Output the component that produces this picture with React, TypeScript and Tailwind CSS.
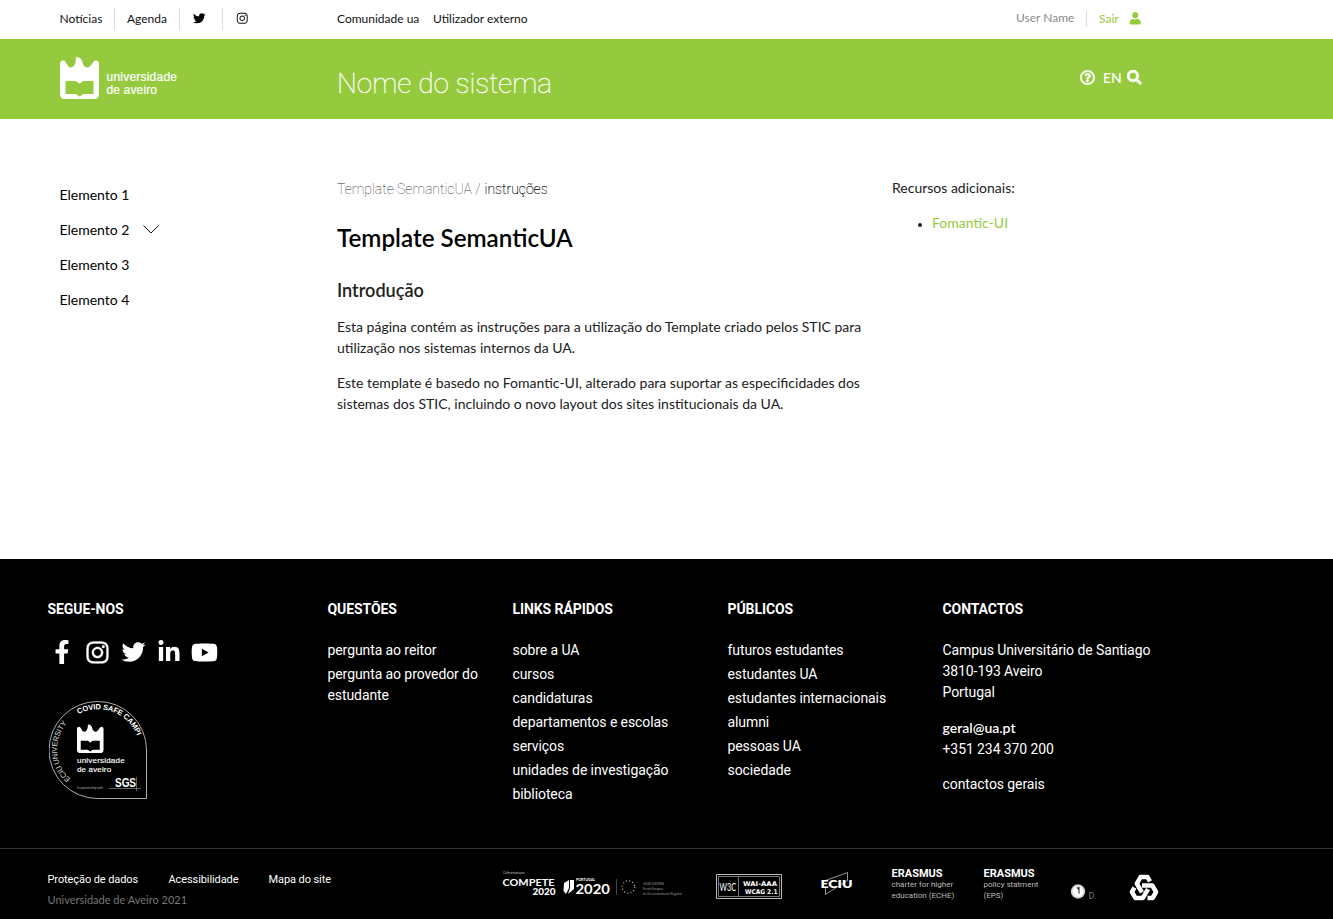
import React from "react";
import {
  FaTwitter,
  FaInstagram,
  FaUser,
  FaSearch,
  FaRegQuestionCircle,
  FaFacebookF,
  FaLinkedinIn,
  FaYoutube,
} from "react-icons/fa";

const lato = "font-['Lato',sans-serif]";
const roboto = "font-['Roboto',sans-serif]";

function Crest() {
  return (
    <path
      fillRule="evenodd"
      d="M0 7C0 4 2 3 4 3.500C6.500 4.500 7 10 10.500 10.500C14 10.500 16 7 16 0C20 0 22.500 3 22.500 5.500C23 9 25 10.500 27.500 10.500C31.500 10 32.500 4.500 35 3.500C37 3 39 4 39 7V37Q39 42 34 42H5Q0 42 0 37ZM5.500 24V37H15C17.500 37 18 39.500 19.500 39.500C21 39.500 21.500 37 24 37H33.500V24H24C21.500 24 21 26.500 19.500 26.500C18 26.500 17.500 24 15 24Z"
    />
  );
}

function UniversityLogo() {
  return (
    <svg width="120" height="44" viewBox="0 0 120 44" fill="#fff" className="block">
      <Crest />
      <g fontFamily="Liberation Sans" fontSize="12" stroke="#fff" strokeWidth=".2">
        <text x="46.500" y="23.500" textLength="70.500">universidade</text>
        <text x="46.500" y="36.500" textLength="50.500">de aveiro</text>
      </g>
    </svg>
  );
}

function CovidBadge() {
  return (
    <svg width="100" height="100" viewBox="0 0 100 100" fill="#fff" className="block">
      <defs>
        <path id="arcTop" d="M29.500 14A42 42 0 0 1 91 50" />
        <path id="arcLeft" d="M21.500 79A39 39 0 0 1 21.500 20" />
      </defs>
      <path d="M48.500 1.500A48.500 48.500 0 0 1 97.500 50V98.500H48.500A48.500 48.500 0 0 1 48.500 1.500Z" fill="none" stroke="#aaa" strokeWidth="1" />
      <g fontFamily="Liberation Sans">
        <text fontSize="7.500" fontWeight="700" textLength="70">
          <textPath href="#arcTop">COVID SAFE CAMPI</textPath>
        </text>
        <text fontSize="7.500" fill="#ddd" textLength="62">
          <textPath href="#arcLeft">ECIU UNIVERSITY</textPath>
        </text>
        <g transform="translate(28 24.500) scale(.68)"><Crest /></g>
        <text x="28" y="63" fontSize="8" textLength="47.500" stroke="#fff" strokeWidth=".15">universidade</text>
        <text x="28" y="71.500" fontSize="8" textLength="34" stroke="#fff" strokeWidth=".15">de aveiro</text>
        <text x="28" y="88.500" fontSize="3.500" fill="#aaa" textLength="26">In partnership with</text>
        <text x="66" y="87" fontSize="12.500" fontWeight="700" textLength="21" lengthAdjust="spacingAndGlyphs">SGS</text>
      </g>
      <path d="M60 88.500H92M87.500 77V91" stroke="#888" strokeWidth=".7" />
    </svg>
  );
}

function FundingLogos() {
  return (
    <svg width="190" height="32" viewBox="0 0 190 32" fill="#fff" className="block">
      <g fontFamily="Lato">
        <text x="1" y="5" fontSize="4" fill="#999" textLength="22">Cofinanciado por:</text>
        <text x="0.500" y="17" fontSize="9" fontWeight="700" textLength="52" lengthAdjust="spacingAndGlyphs">COMPETE</text>
        <text x="30.500" y="26" fontSize="8.500" fontWeight="900" textLength="23" lengthAdjust="spacingAndGlyphs">2020</text>
        <text x="74" y="11.500" fontSize="3.600" fontWeight="700" textLength="19">PORTUGAL</text>
        <text x="73.500" y="25" fontSize="13" fontWeight="700" textLength="34.500" lengthAdjust="spacingAndGlyphs">2020</text>
        <g fontSize="3.200" fill="#999">
          <text x="141" y="16" textLength="21" lengthAdjust="spacingAndGlyphs">UNIÃO EUROPEIA</text>
          <text x="141" y="21" textLength="20" lengthAdjust="spacingAndGlyphs">Fundo Europeu</text>
          <text x="141" y="25.700" textLength="39" lengthAdjust="spacingAndGlyphs">de Desenvolvimento Regional</text>
        </g>
      </g>
      <path d="M62 14L67 11V19L64 25L61.500 22ZM68 11H72V20L66 25L68 19Z" />
      <path d="M114.500 10V26" stroke="#444" />
      <circle cx="126.500" cy="18" r="6.200" fill="none" stroke="#bbb" strokeWidth="1.300" strokeDasharray="1 2.246" />
    </svg>
  );
}

function W3CBadge() {
  return (
    <svg width="66" height="25" viewBox="0 0 66 25" fill="#fff" className="block">
      <path d="M.5.5H65.500V24.500H.5Z" fill="none" stroke="#bbb" />
      <path d="M2.500 2.500H63.500V22.500H2.500ZM22.500 2.500V22.500" fill="none" stroke="#777" />
      <text x="3.500" y="17" fontFamily="Lato" fontSize="11" textLength="16.500" lengthAdjust="spacingAndGlyphs">W3C</text>
      <g fontFamily="DejaVu Sans" fontWeight="700" fontSize="6.500">
        <text x="27" y="11.500" textLength="34" lengthAdjust="spacingAndGlyphs">WAI-AAA</text>
        <text x="29" y="20" textLength="32.500" lengthAdjust="spacingAndGlyphs">WCAG 2.1</text>
      </g>
    </svg>
  );
}

function EciuLogo() {
  return (
    <svg width="34" height="26" viewBox="0 0 34 26" className="block">
      <path d="M5.500 17V23.500L28 9M5.500 9.500L27.500 1.500V9" fill="none" stroke="#bbb" strokeWidth=".8" />
      <text x="0.500" y="16.500" fontFamily="Lato" fontSize="11.500" fontWeight="800" fill="#fff" textLength="32" lengthAdjust="spacingAndGlyphs">ECIU</text>
    </svg>
  );
}

function SphereLogo() {
  return (
    <svg width="28" height="18" viewBox="0 0 28 18" className="block">
      <defs>
        <radialGradient id="sphere">
          <stop offset=".6" stopColor="#fff" />
          <stop offset="1" stopColor="#bbb" />
        </radialGradient>
      </defs>
      <circle cx="8" cy="8.500" r="7.200" fill="url(#sphere)" />
      <path d="M6.500 4.500L9.500 4V11L8.500 10.500V7Z" fill="#222" />
      <text x="18.500" y="15.500" fontFamily="Roboto" fontSize="9" fill="#777">D.</text>
    </svg>
  );
}

function KnotArm() {
  return <path d="M13 11.500H23.300L27.100 18L23.600 24H18.500" />;
}

function KnotLogo() {
  return (
    <svg width="30" height="27" viewBox="0 0 30 27" className="block" fill="none" stroke="#fff" strokeWidth="4.500" strokeLinejoin="round">
      <KnotArm />
      <g transform="rotate(120 15 15)"><KnotArm /></g>
      <g transform="rotate(240 15 15)"><KnotArm /></g>
    </svg>
  );
}

function FooterColumn({ title, width, items }: { title: string; width: string; items: string[] }) {
  return (
    <section className={width}>
      <h2 className="h-[21px] font-bold">{title}</h2>
      <ul className="mt-5 flex flex-col gap-[3px]">
        {items.map((t) => (
          <li key={t}>{t}</li>
        ))}
      </ul>
    </section>
  );
}

export default function App() {
  return (
    <div className={`${lato} flex h-[919px] w-[1333px] flex-col overflow-hidden bg-white text-[14px] leading-[21px] text-[#212121]`}>
      <div className="flex h-[39px] shrink-0 items-center pb-[2px] pl-[60px] text-[12px] leading-[22px] text-[#111]">
        <div className="flex w-[277px] items-center">
          <span className="-ml-[0.500px] w-[54.5px]">Notícias</span>
          <span className="w-[65px] border-l border-[#ddd] pl-3">Agenda</span>
          <span className="flex h-[22px] w-[43px] items-center border-l border-[#ddd] pl-[13px] text-black">
            <FaTwitter size={12.5} />
          </span>
          <span className="flex h-[22px] items-center border-l border-[#ddd] pl-[13px]">
            <FaInstagram size={12.5} />
          </span>
        </div>
        <span className="w-[96px]">Comunidade ua</span>
        <span className="w-[583px]">Utilizador externo</span>
        <span className="h-[24px] w-[70px] text-[#8a8a8a]">User Name</span>
        <span className="flex h-[16px] items-center border-l border-[#ddd] pl-3 text-[#95ca3e]">
          <span className="w-[30px]">Sair</span>
          <FaUser size={12.5} />
        </span>
      </div>

      <header className="flex h-[80px] shrink-0 bg-[#95ca3e] pl-[60px] text-white">
        <div className="w-[277px] pt-[18px]">
          <UniversityLogo />
        </div>
        <h1 className={`${roboto} w-[743px] pt-[25px] text-[28px] leading-[40px] font-thin [-webkit-text-stroke:0.3px_#fff]`}>Nome do sistema</h1>
        <div className="flex h-[77px] items-center">
          <FaRegQuestionCircle size={15} stroke="#fff" strokeWidth={18} />
          <span className="ml-2 w-[24px] font-medium">EN</span>
          <FaSearch size={14.5} stroke="#fff" strokeWidth={24} />
        </div>
      </header>

      <main className="flex h-[440px] shrink-0 pl-[60px]">
        <nav className="flex w-[277px] flex-col gap-[14px] pt-[65px] text-black">
          <a className="-ml-[0.500px]">Elemento 1</a>
          <a className="-ml-[0.500px] flex items-center">
            Elemento 2
            <svg width="16" height="9" viewBox="0 0 16 9" fill="none" stroke="#111" className="ml-[13.5px]">
              <path d="M.5.5L8 8L15.500.5" />
            </svg>
          </a>
          <a className="-ml-[0.500px]">Elemento 3</a>
          <a className="-ml-[0.500px]">Elemento 4</a>
        </nav>
        <article className="w-[555px] pt-[60px]">
          <p className={`${roboto} font-thin text-black`}>
            <span className="text-[#333]">Template SemanticUA / </span>
            <span className="ml-[0.5px] [-webkit-text-stroke:0.15px_#000]">instruções</span>
          </p>
          <h2 className="mt-[22px] text-[24.2px] leading-[31px] font-semibold text-black">Template SemanticUA</h2>
          <h3 className="mt-[25px] text-[18.1px] leading-[24px] font-semibold">Introdução</h3>
          <p className="mt-[14px] whitespace-nowrap">
            Esta página contém as instruções para a utilização do Template criado pelos STIC para
            <br />
            utilização nos sistemas internos da UA.
          </p>
          <p className="mt-[14px] whitespace-nowrap">
            Este template é basedo no Fomantic-UI, alterado para suportar as especificidades dos
            <br />
            sistemas dos STIC, incluindo o novo layout dos sites institucionais da UA.
          </p>
        </article>
        <aside className="pt-[58px]">
          <p>Recursos adicionais:</p>
          <ul className="mt-[14px] list-disc pl-10 marker:text-[11px]">
            <li><a className="text-[#95ca3e]">Fomantic-UI</a></li>
          </ul>
        </aside>
      </main>

      <footer className={`${roboto} flex h-[360px] shrink-0 flex-col bg-black text-white`}>
        <div className="flex h-[290px] border-b border-[#333] pt-[40px] pl-[47.5px] tracking-[-0.09px]">
          <section className="w-[280px]">
            <h2 className="h-[21px] font-bold">SEGUE-NOS</h2>
            <div className="mt-5 flex h-[24px] items-center">
              <FaFacebookF size={24} className="ml-0.5 w-[24px]" />
              <FaInstagram size={25} className="ml-[11px] w-[25px]" stroke="#fff" strokeWidth={8} />
              <FaTwitter size={24} className="ml-[11px] w-[25px]" />
              <FaLinkedinIn size={24} className="ml-[11px] w-[24px]" />
              <FaYoutube size={27} className="ml-[10px] w-[27px]" />
            </div>
            <div className="mt-[36px] ml-px">
              <CovidBadge />
            </div>
          </section>
          <FooterColumn title="QUESTÕES" width="w-[185px] pr-6" items={["pergunta ao reitor", "pergunta ao provedor do estudante"]} />
          <FooterColumn
            title="LINKS RÁPIDOS"
            width="w-[215px]"
            items={["sobre a UA", "cursos", "candidaturas", "departamentos e escolas", "serviços", "unidades de investigação", "biblioteca"]}
          />
          <FooterColumn
            title="PÚBLICOS"
            width="w-[215px]"
            items={["futuros estudantes", "estudantes UA", "estudantes internacionais", "alumni", "pessoas UA", "sociedade"]}
          />
          <section>
            <h2 className="h-[21px] font-bold">CONTACTOS</h2>
            <p className="mt-5">
              Campus Universitário de Santiago
              <br />
              3810-193 Aveiro
              <br />
              Portugal
            </p>
            <p className="mt-[14px]">
              <b className={`${lato} font-semibold tracking-normal`}>geral@ua.pt</b>
              <br />
              +351 234 370 200
            </p>
            <p className="mt-[14px]">contactos gerais</p>
          </section>
        </div>

        <div className="flex h-[70px] pl-[47.5px]">
          <div className="w-[454.5px] pt-[20px] text-[11px]">
            <div className="flex h-[20px] tracking-[-0.09px]">
              <a className="w-[121px]">Proteção de dados</a>
              <a className="w-[100px]">Acessibilidade</a>
              <a>Mapa do site</a>
            </div>
            <p className={`${lato} text-[#767676]`}>Universidade de Aveiro 2021</p>
          </div>
          <div className="w-[214px] pt-[20px]"><FundingLogos /></div>
          <div className="w-[104px] pt-[25px]"><W3CBadge /></div>
          <div className="w-[71.5px] pt-[22px]"><EciuLogo /></div>
          <div className="w-[92px] pt-[18px] text-[8px] leading-[10.5px] text-[#bbb]">
            <b className="block text-[11px] leading-[13px] font-bold text-white">ERASMUS</b>
            charter for higher
            <br />
            education (ECHE)
          </div>
          <div className="w-[86.5px] pt-[18px] text-[8px] leading-[10.5px] text-[#bbb]">
            <b className="block text-[11px] leading-[13px] font-bold text-white">ERASMUS</b>
            policy statment
            <br />
            (EPS)
          </div>
          <div className="w-[59px] pt-[34px]"><SphereLogo /></div>
          <div className="pt-[25px]"><KnotLogo /></div>
        </div>
      </footer>
    </div>
  );
}
